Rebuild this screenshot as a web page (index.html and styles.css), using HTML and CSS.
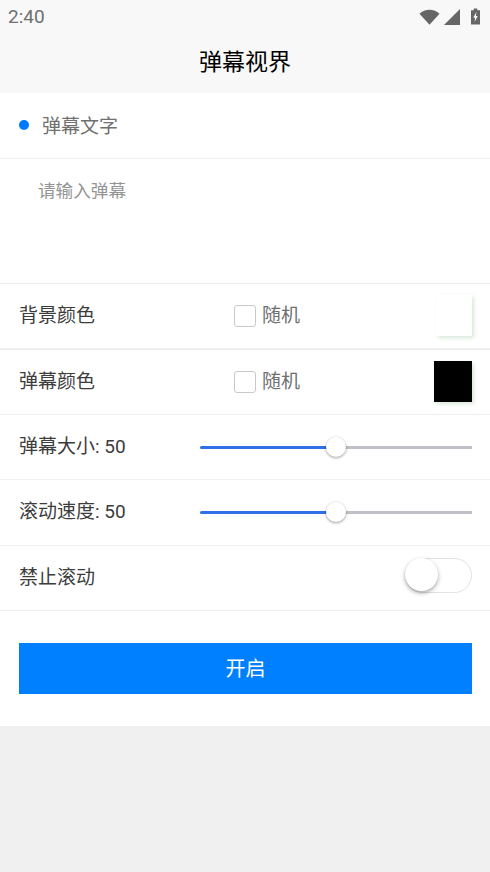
FILE: index.html
```html
<!DOCTYPE html>
<html lang="zh">
<head>
<meta charset="utf-8">
<title>弹幕视界</title>
<link rel="stylesheet" href="styles.css">
</head>
<body>
<header class="top">
  <div class="status">
    <span class="time">2:40</span>
    <span class="status-icons">
      <svg class="wifi" viewBox="0 0 22 16"><path d="M0.5 4.5C3.5 1.8 7 0.5 11 0.5s7.500 1.300 10.500 4L11 16z"/></svg>
      <svg class="signal" viewBox="0 0 16 16"><path d="M16 0v16H0z"/></svg>
      <svg class="battery" viewBox="0 0 10 18"><path fill-rule="evenodd" d="M3 0h4v2h3v16H0V2h3zM6 4L2.500 10.500H4.500L4 15l3.500-6.500H5.500z"/></svg>
    </span>
  </div>
  <h1 class="title">弹幕视界</h1>
</header>
<main class="panel">
  <div class="section-head"><span class="dot"></span><span class="section-label">弹幕文字</span></div>
  <div class="text-box"><span class="placeholder">请输入弹幕</span></div>
  <div class="row first">
    <span class="label">背景颜色</span>
    <span class="random"><span class="check"></span><span class="random-text">随机</span></span>
    <span class="swatch white"></span>
  </div>
  <div class="row">
    <span class="label">弹幕颜色</span>
    <span class="random"><span class="check"></span><span class="random-text">随机</span></span>
    <span class="swatch black"></span>
  </div>
  <div class="row compact">
    <span class="label">弹幕大小: 50</span>
    <span class="slider"><span class="fill"></span><span class="rest"></span><span class="thumb"></span></span>
  </div>
  <div class="row">
    <span class="label">滚动速度: 50</span>
    <span class="slider"><span class="fill"></span><span class="rest"></span><span class="thumb"></span></span>
  </div>
  <div class="row">
    <span class="label">禁止滚动</span>
    <span class="switch"><span class="knob"></span></span>
  </div>
  <div class="action"><button class="start" type="button">开启</button></div>
</main>
</body>
</html>
```
FILE: styles.css
```css
* { box-sizing: border-box; }
html, body { margin: 0; height: 100%; }
body {
  background: #f0f0f0;
  font-family: Roboto, "Noto Sans CJK SC", sans-serif;
  color: #333;
  overflow: hidden;
}
.top { background: #f8f8f8; height: 93px; }
.status {
  height: 33px;
  padding: 0 10px 0 8px;
  display: flex;
  justify-content: space-between;
  align-items: center;
}
.time { font-size: 19px; color: #6f6f6f; }
.status-icons { display: flex; align-items: center; gap: 4px; }
.status-icons svg { fill: #666; display: block; }
.wifi { width: 21px; height: 16px; }
.signal { width: 16px; height: 16px; }
.battery { width: 9px; height: 17px; margin-left: 7px; }
.title {
  margin: 0;
  height: 60px;
  padding-bottom: 1px;
  display: flex;
  align-items: center;
  justify-content: center;
  font-size: 23px;
  line-height: 30px;
  font-weight: 400;
  color: #000;
}
.panel { background: #fff; height: 633px; }
.section-head {
  height: 66px;
  border-bottom: 1px solid #f2f2f2;
  display: flex;
  align-items: center;
  padding: 0 19px 2px;
}
.dot { width: 10px; height: 10px; border-radius: 50%; background: #007aff; margin-right: 13px; }
.section-label { font-size: 19px; line-height: 24px; padding-top: 4px; color: #707070; }
.text-box {
  height: 125px;
  padding: 21px 39px 0;
  border-bottom: 1px solid #ececec;
}
.placeholder { font-size: 17.600px; line-height: 22px; color: #949494; display: block; margin-left: -1px; }
.row {
  height: 65.330px;
  padding: 0 18px 3px 19px;
  border-bottom: 1px solid #efefef;
  display: flex;
  align-items: center;
  position: relative;
}
.row.first { height: 66px; border-bottom: 2px solid #eeeeee; }
.row.compact { height: 65px; }
.label { font-size: 19px; line-height: 24px; padding-top: 3px; color: #3c3c3c; flex: 0 0 181px; white-space: nowrap; }
.random { display: flex; align-items: center; margin-left: 34px; padding-top: 3px; }
.check {
  width: 22px;
  height: 22px;
  border: 1px solid #c8c8c8;
  border-radius: 3px;
  background: #fff;
  margin-right: 6px;
}
.random-text { font-size: 19px; line-height: 24px; color: #707070; }
.swatch { width: 38px; height: 41px; margin-left: auto; margin-top: 1px; box-shadow: 2px 2px 4px rgba(150, 190, 150, 0.35); }
.swatch.white { background: #fff; width: 36px; }
.swatch.black { background: #000; }
.slider { flex: 1; display: flex; align-items: center; position: relative; height: 20px; margin-top: 3px; }
.fill { flex: 0 0 50%; height: 3px; background: #2f6fe8; border-radius: 2px 0 0 2px; }
.rest { flex: 1; height: 3px; background: #c0c0c8; }
.thumb {
  position: absolute;
  left: 50%;
  top: 0;
  width: 20px;
  height: 20px;
  margin-left: -10px;
  border-radius: 50%;
  background: #fff;
  box-shadow: 0 1px 3px rgba(0, 0, 0, 0.4);
}
.switch {
  margin-left: auto;
  width: 67px;
  height: 35px;
  margin-bottom: 2px;
  border: 1px solid #e2e2e2;
  border-radius: 18px;
  background: #fff;
  position: relative;
}
.knob {
  position: absolute;
  left: -1px;
  top: -1px;
  width: 33px;
  height: 33px;
  border-radius: 50%;
  background: #fff;
  box-shadow: 0 2px 4px rgba(0, 0, 0, 0.35);
}
.action { padding: 32px 18px 0 19px; }
.start {
  display: block;
  width: 100%;
  height: 51px;
  border: 0;
  border-radius: 0;
  padding: 1px 0 0;
  background: #0080ff;
  color: #fff;
  font-family: inherit;
  font-size: 20px;
  line-height: 24px;
}
```
